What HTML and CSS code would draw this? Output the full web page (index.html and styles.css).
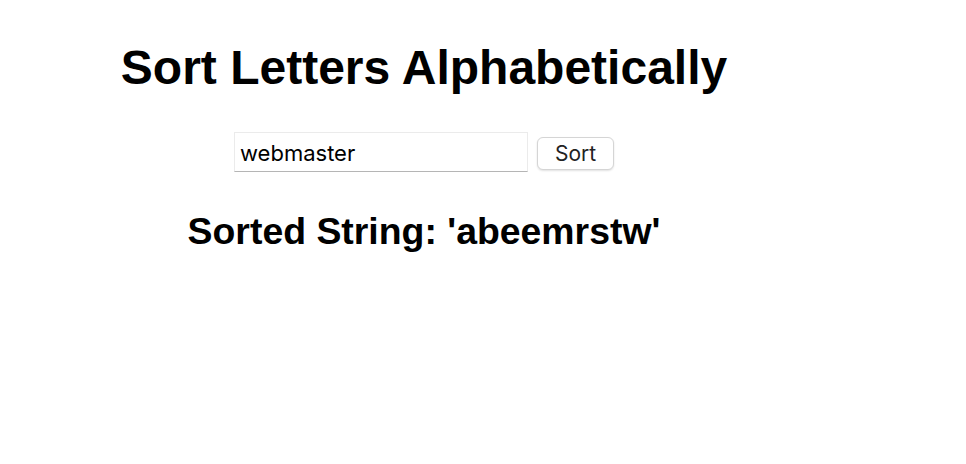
FILE: index.html
```html
<!DOCTYPE html>
<html>
<head>
<meta charset="utf-8">
<link rel="stylesheet" href="styles.css">
</head>
<body>
<div class="app">
  <h1 class="title">Sort Letters Alphabetically</h1>
  <div class="controls">
    <input class="field" type="text" value="webmaster">
    <button class="btn">Sort</button>
  </div>
  <h2 class="result">Sorted String: 'abeemrstw'</h2>
</div>
</body>
</html>
```
FILE: styles.css
```css
html, body {
  margin: 0;
  padding: 0;
  background: #fff;
}
body {
  padding: 8px;
  font-family: "Liberation Sans", Arial, sans-serif;
}
.app {
  width: 832px;
  text-align: center;
}
.title {
  font-size: 48px;
  font-weight: bold;
  margin: 32px 0 0;
  line-height: 55px;
}
.controls {
  display: flex;
  justify-content: center;
  align-items: flex-start;
  gap: 9px;
  margin-top: 37px;
}
.field {
  width: 294px;
  height: 40px;
  box-sizing: border-box;
  border: 1px solid #ebebeb;
  border-bottom: 1px solid #b5b5b5;
  padding: 2px 5px 0;
  font-family: Inter, "Noto Sans", sans-serif;
  font-size: 22px;
  color: #000;
  outline: none;
}
.btn {
  width: 77px;
  height: 33px;
  margin-top: 5px;
  box-sizing: border-box;
  border: 1px solid #d5d5d5;
  border-radius: 6px;
  background: #fff;
  box-shadow: 0 1px 2px rgba(0,0,0,0.12);
  font-family: Inter, "Noto Sans", sans-serif;
  font-size: 21px;
  color: #222;
  padding: 0;
}
.result {
  font-size: 37.4px;
  font-weight: bold;
  margin: 38px 0 0;
  line-height: 43px;
}
```
